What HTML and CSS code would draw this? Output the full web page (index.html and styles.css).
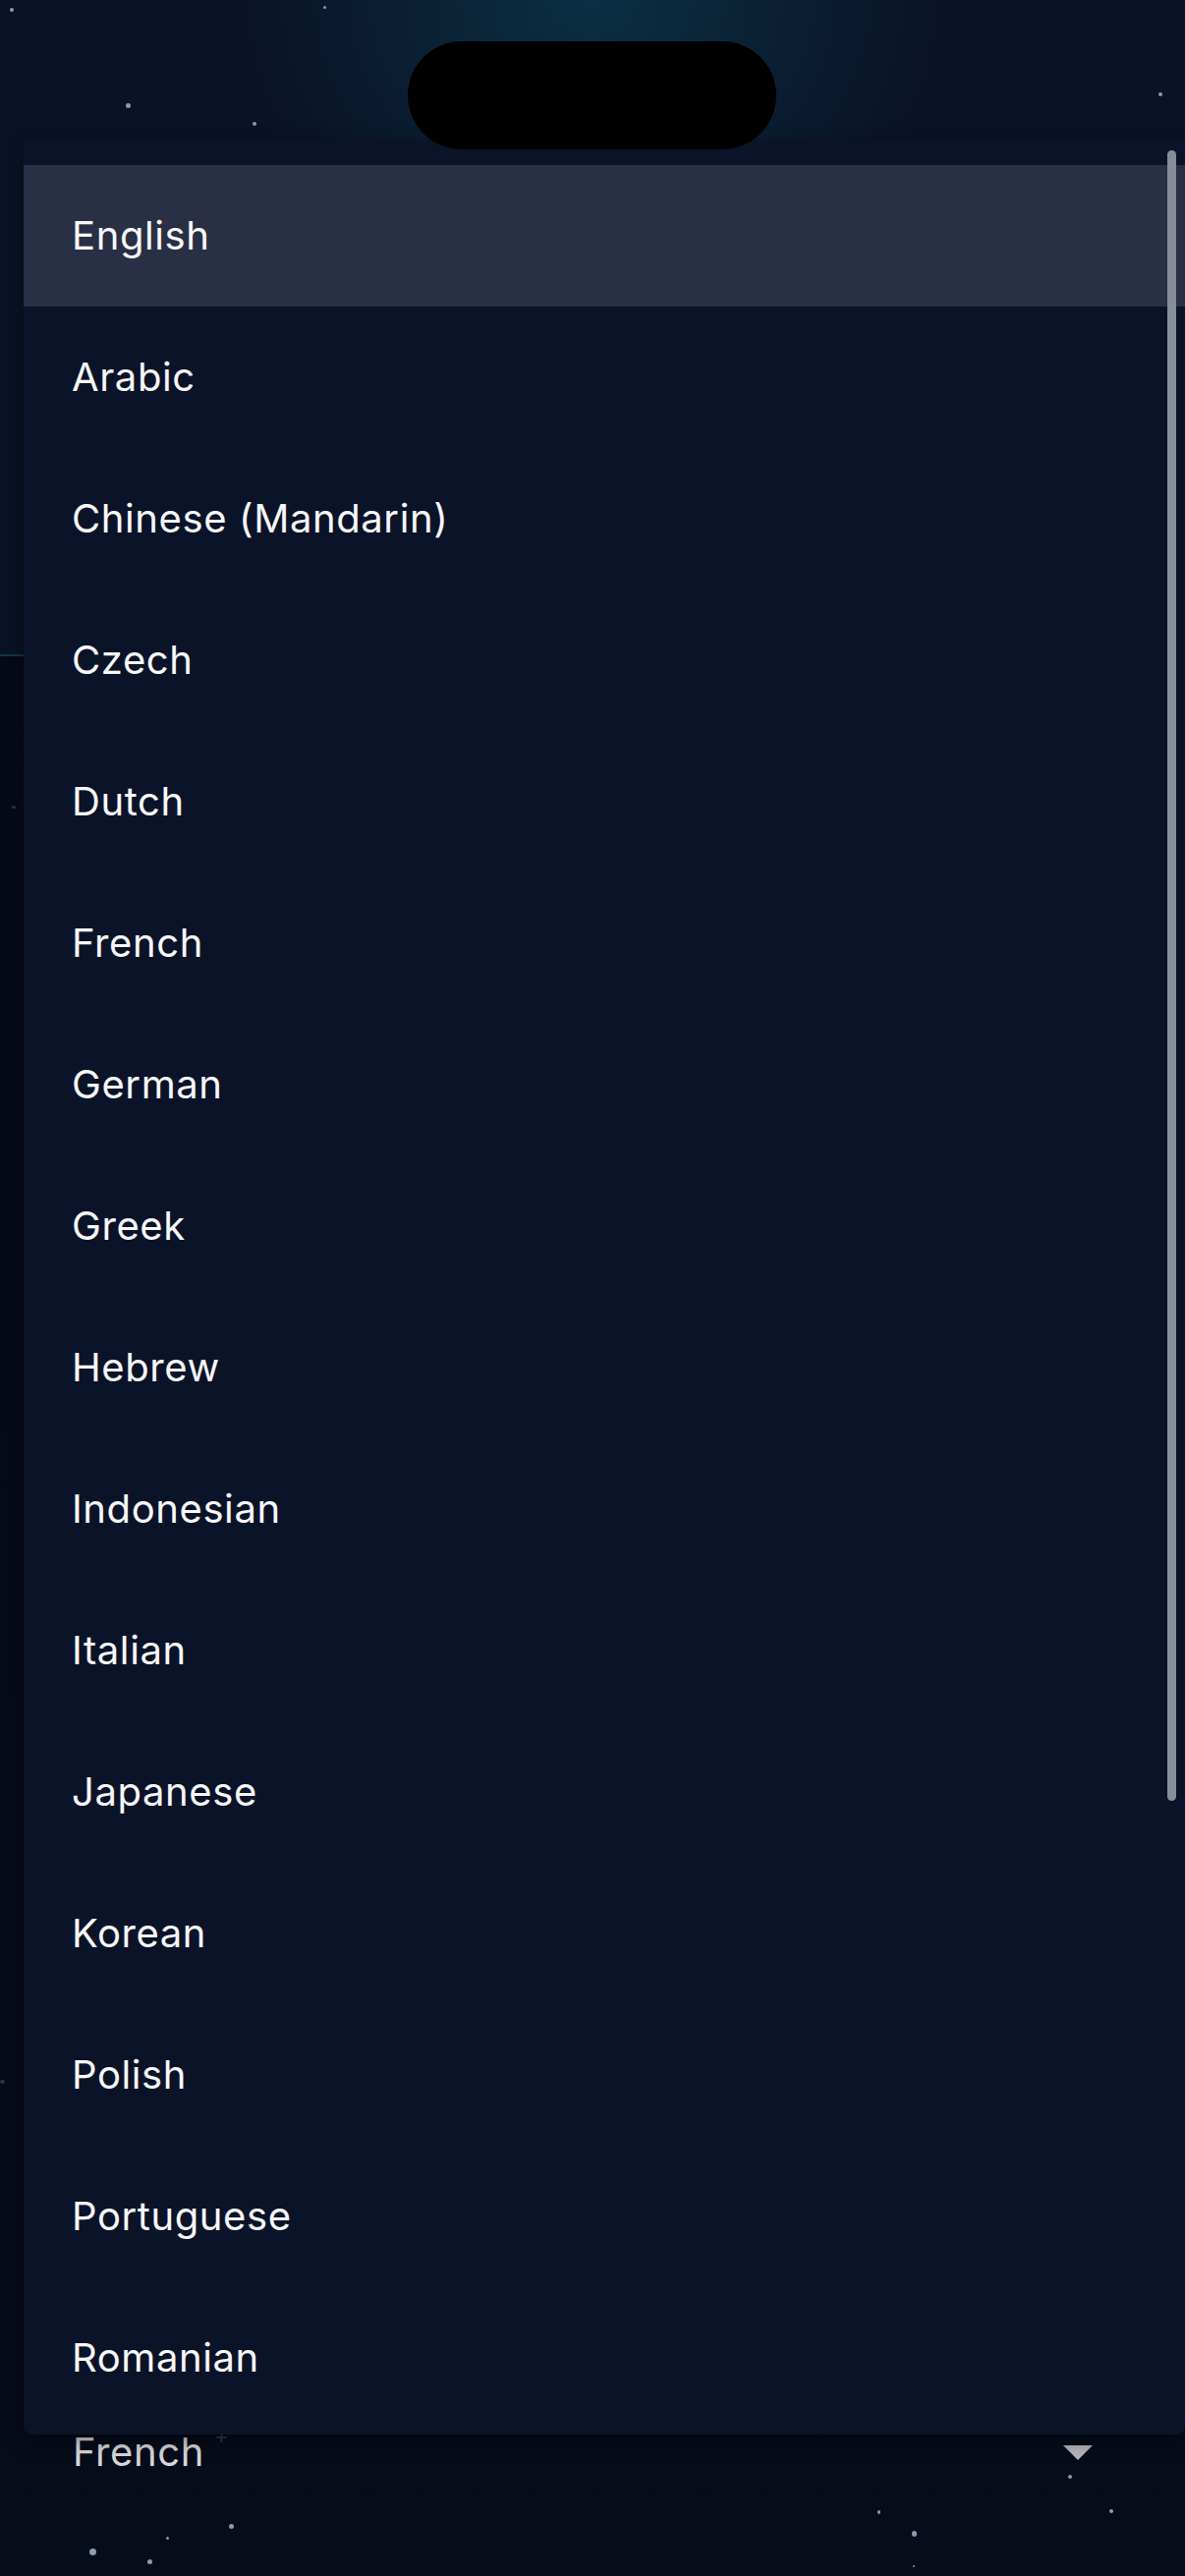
FILE: index.html
```html
<!DOCTYPE html>
<html lang="en">
<head>
<meta charset="UTF-8">
<meta name="viewport" content="width=device-width, initial-scale=1.0">
<title>Language</title>
<link rel="stylesheet" href="styles.css">
</head>
<body>
<div class="screen">
    <div class="hero"></div>

    <div class="content">
        <div class="select-row">
            <span class="select-value">French</span>
            <span class="select-caret"></span>
        </div>
    </div>

    <!-- stars -->
    <span class="star" style="left:10px;top:8px;width:4px;height:4px"></span>
    <span class="star" style="left:329px;top:6px;width:3px;height:3px"></span>
    <span class="star" style="left:128px;top:105px;width:5px;height:5px"></span>
    <span class="star" style="left:257px;top:124px;width:4px;height:4px"></span>
    <span class="star" style="left:1179px;top:94px;width:4px;height:4px"></span>
    <span class="star dim" style="left:12px;top:820px;width:4px;height:3px"></span>
    <span class="star dim" style="left:0;top:2117px;width:5px;height:4px"></span>
    <span class="star" style="left:91px;top:2594px;width:7px;height:7px"></span>
    <span class="star" style="left:150px;top:2605px;width:5px;height:5px"></span>
    <span class="star" style="left:169px;top:2582px;width:3px;height:3px"></span>
    <span class="star" style="left:233px;top:2569px;width:5px;height:5px"></span>
    <span class="star" style="left:1087px;top:2519px;width:4px;height:4px"></span>
    <span class="star" style="left:1129px;top:2554px;width:4px;height:4px"></span>
    <span class="star" style="left:893px;top:2555px;width:3px;height:4px"></span>
    <span class="star" style="left:928px;top:2576px;width:5px;height:6px"></span>
    <span class="star" style="left:929px;top:2611px;width:2px;height:2px"></span>
    <span class="sparkle">+</span>

    <div class="island"></div>

    <div class="dropdown">
        <ul class="lang-list">
            <li class="lang-item active">English</li>
            <li class="lang-item">Arabic</li>
            <li class="lang-item">Chinese (Mandarin)</li>
            <li class="lang-item">Czech</li>
            <li class="lang-item">Dutch</li>
            <li class="lang-item">French</li>
            <li class="lang-item">German</li>
            <li class="lang-item">Greek</li>
            <li class="lang-item">Hebrew</li>
            <li class="lang-item">Indonesian</li>
            <li class="lang-item">Italian</li>
            <li class="lang-item">Japanese</li>
            <li class="lang-item">Korean</li>
            <li class="lang-item">Polish</li>
            <li class="lang-item">Portuguese</li>
            <li class="lang-item">Romanian</li>
        </ul>
        <div class="scroll-thumb"></div>
    </div>
</div>
</body>
</html>
```

FILE: styles.css
```css
html, body {
    margin: 0;
    padding: 0;
}

body {
    width: 1206px;
    height: 2622px;
    overflow: hidden;
    background: #060b18;
    font-family: Inter, "Noto Sans", sans-serif;
    color: #f4f5f8;
}

.screen {
    position: relative;
    width: 1206px;
    height: 2622px;
    display: flex;
    flex-direction: column;
}

.hero {
    height: 666px;
    flex: none;
    background:
        radial-gradient(ellipse 360px 300px at 603px 0, rgba(12, 52, 72, 0.85), rgba(12, 52, 72, 0) 100%),
        #0a1226;
    border-bottom: 2px solid #0e3a42;
}

.content {
    flex: 1;
    display: flex;
    flex-direction: column;
    justify-content: flex-end;
    padding-bottom: 97px;
    background: linear-gradient(#050a17, #070c1b);
}

.select-row {
    height: 60px;
    display: flex;
    align-items: center;
    justify-content: space-between;
    padding: 0 94px 0 74px;
}

.select-value {
    font-size: 40px;
    letter-spacing: 0.6px;
    color: #d6d7da;
    line-height: 1;
    margin-top: 2px;
}

.select-caret {
    width: 0;
    height: 0;
    border-left: 15px solid transparent;
    border-right: 15px solid transparent;
    border-top: 15px solid #b5b6ba;
    margin-top: 2px;
}

/* decoration */
.star {
    position: absolute;
    border-radius: 50%;
    background: #8c9bb0;
}

.star.dim {
    background: #2e3648;
}

.sparkle {
    position: absolute;
    left: 218px;
    top: 2468px;
    font-size: 22px;
    color: #30384a;
    line-height: 1;
}

.island {
    position: absolute;
    top: 42px;
    left: 415px;
    width: 375px;
    height: 110px;
    border-radius: 55px;
    background: #000;
    z-index: 3;
}

/* language picker */
.dropdown {
    position: absolute;
    top: 143px;
    left: 24px;
    right: 0;
    height: 2335px;
    overflow: hidden;
    background: #0b1328;
    border-radius: 0 0 8px 8px;
    box-shadow: 0 6px 20px rgba(0, 0, 0, 0.45);
    z-index: 2;
}

.lang-list {
    list-style: none;
    margin: 0;
    padding: 25px 0 0;
}

.lang-item {
    height: 144px;
    display: flex;
    align-items: center;
    padding-left: 49px;
    font-size: 40px;
    letter-spacing: 0.6px;
    line-height: 1;
    color: #f6f7f9;
}

.lang-item.active {
    background: #292f44;
}

.scroll-thumb {
    position: absolute;
    top: 10px;
    right: 9px;
    width: 9px;
    height: 1680px;
    border-radius: 5px;
    background: #878c99;
}
```
